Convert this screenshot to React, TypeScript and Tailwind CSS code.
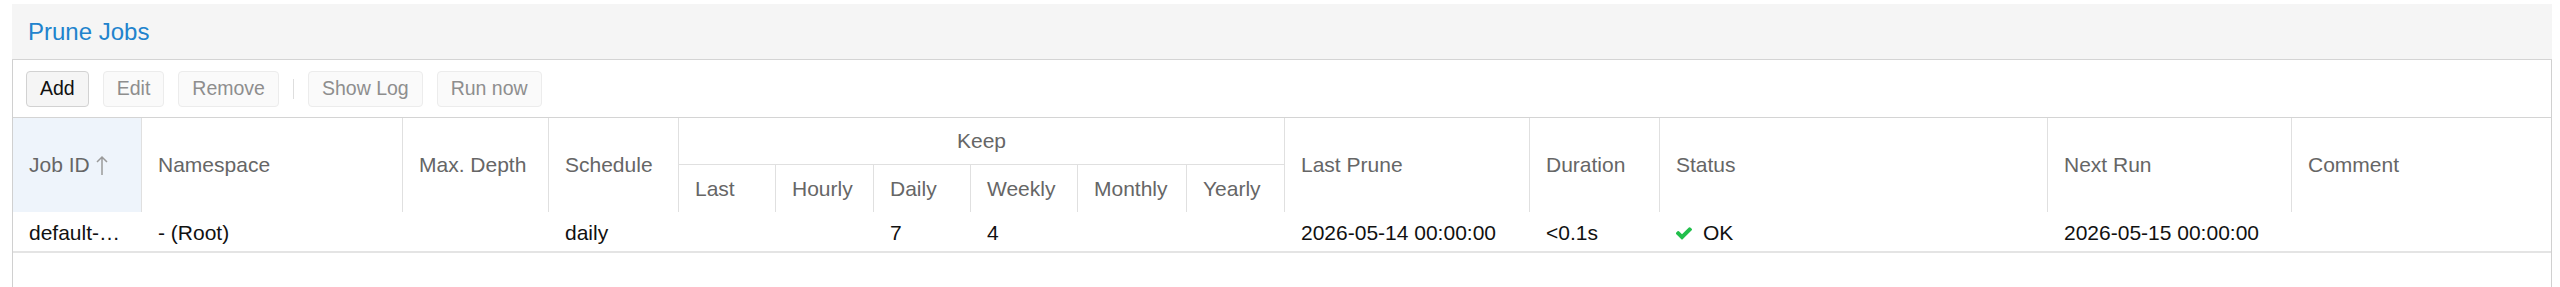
const grid =
  "grid grid-cols-[129px_261px_146px_130px_97px_98px_97px_107px_109px_98px_245px_130px_388px_244px_259px]"

const keepCols = ["Last", "Hourly", "Daily", "Weekly", "Monthly", "Yearly"]

const rows = [
  {
    id: "default-…",
    namespace: "- (Root)",
    depth: "",
    schedule: "daily",
    keep: ["", "", "7", "4", "", ""],
    lastPrune: "2026-05-14 00:00:00",
    duration: "<0.1s",
    status: "OK",
    nextRun: "2026-05-15 00:00:00",
    comment: "",
  },
]

function ToolButton({ label, disabled }: { label: string; disabled?: boolean }) {
  return (
    <button
      className={`h-[36px] px-[13px] rounded-[4px] border text-[19.5px] leading-none ${
        disabled
          ? "bg-[#fafafa] border-[#ececec] text-[#8e8e8e]"
          : "bg-[#f5f5f5] border-[#d2d2d2] text-[#111]"
      }`}
    >
      {label}
    </button>
  )
}

function SortArrow() {
  return (
    <svg width="12" height="21" viewBox="0 0 12 21" className="ml-[6px]" aria-hidden>
      <path d="M6 20V2M1 7l5-5 5 5" fill="none" stroke="#9a9a9a" strokeWidth="1.5" />
    </svg>
  )
}

function CheckIcon() {
  return (
    <svg width="16" height="14" viewBox="141 260 1530 1270" className="mr-[11px]" aria-hidden>
      <path
        fill="#21bf4b"
        d="M1671 566q0 40-28 68l-724 724-136 136q-28 28-68 28t-68-28l-136-136-362-362q-28-28-28-68t28-68l136-136q28-28 68-28t68 28l294 295 656-657q28-28 68-28t68 28l136 136q28 28 28 68z"
      />
    </svg>
  )
}

function HeadCell({
  children,
  className = "",
}: {
  children?: React.ReactNode
  className?: string
}) {
  return (
    <div className={`flex items-center pl-[16px] text-[#666] whitespace-nowrap ${className}`}>
      {children}
    </div>
  )
}

export default function App() {
  return (
    <div
      className="h-[287px] overflow-hidden bg-white pt-[4px] pl-[12px] pr-[8px] flex flex-col text-[21px]"
      style={{ fontFamily: '"Liberation Sans", Arial, sans-serif' }}
    >
      <div className="h-[56px] shrink-0 bg-[#f5f5f5] border-b border-[#d4d4d4] flex items-center pl-[16px]">
        <span className="text-[24px] text-[#2183cd]">Prune Jobs</span>
      </div>

      <div className="flex-1 border-x border-[#d0d0d0] flex flex-col">
        <div className="h-[58px] shrink-0 border-b border-[#d4d4d4] flex items-start gap-[14px] pl-[13px] pt-[11px]">
          <ToolButton label="Add" />
          <ToolButton label="Edit" disabled />
          <ToolButton label="Remove" disabled />
          <div className="w-px h-[20px] bg-[#dedede] self-start mt-[8px]" />
          <ToolButton label="Show Log" disabled />
          <ToolButton label="Run now" disabled />
        </div>

        <div className={`${grid} grid-rows-[47px_47px] shrink-0`}>
          <HeadCell className="row-span-2 bg-[#eef4fb] border-r border-[#e0e0e0]">
            Job ID
            <SortArrow />
          </HeadCell>
          <HeadCell className="row-span-2 border-r border-[#e0e0e0]">Namespace</HeadCell>
          <HeadCell className="row-span-2 border-r border-[#e0e0e0]">Max. Depth</HeadCell>
          <HeadCell className="row-span-2 border-r border-[#e0e0e0]">Schedule</HeadCell>
          <div className="col-span-6 flex items-center justify-center text-[#666] border-r border-b border-[#e0e0e0]">
            Keep
          </div>
          <HeadCell className="row-span-2 border-r border-[#e0e0e0]">Last Prune</HeadCell>
          <HeadCell className="row-span-2 border-r border-[#e0e0e0]">Duration</HeadCell>
          <HeadCell className="row-span-2 border-r border-[#e0e0e0]">Status</HeadCell>
          <HeadCell className="row-span-2 border-r border-[#e0e0e0]">Next Run</HeadCell>
          <HeadCell className="row-span-2">Comment</HeadCell>
          {keepCols.map((k) => (
            <HeadCell key={k} className="border-r border-[#e0e0e0]">
              {k}
            </HeadCell>
          ))}
        </div>

        {rows.map((r) => (
          <div
            key={r.id}
            className={`${grid} h-[41px] shrink-0 pt-[3px] border-b-2 border-[#e4e4e4] text-[#111]`}
          >
            <div className="flex items-center pl-[16px] whitespace-nowrap overflow-hidden">{r.id}</div>
            <div className="flex items-center pl-[16px] whitespace-nowrap">{r.namespace}</div>
            <div className="flex items-center pl-[16px]">{r.depth}</div>
            <div className="flex items-center pl-[16px]">{r.schedule}</div>
            {r.keep.map((v, i) => (
              <div key={i} className="flex items-center pl-[16px]">
                {v}
              </div>
            ))}
            <div className="flex items-center pl-[16px] whitespace-nowrap">{r.lastPrune}</div>
            <div className="flex items-center pl-[16px]">{r.duration}</div>
            <div className="flex items-center pl-[16px]">
              <CheckIcon />
              {r.status}
            </div>
            <div className="flex items-center pl-[16px] whitespace-nowrap">{r.nextRun}</div>
            <div className="flex items-center pl-[16px]">{r.comment}</div>
          </div>
        ))}
      </div>
    </div>
  )
}
